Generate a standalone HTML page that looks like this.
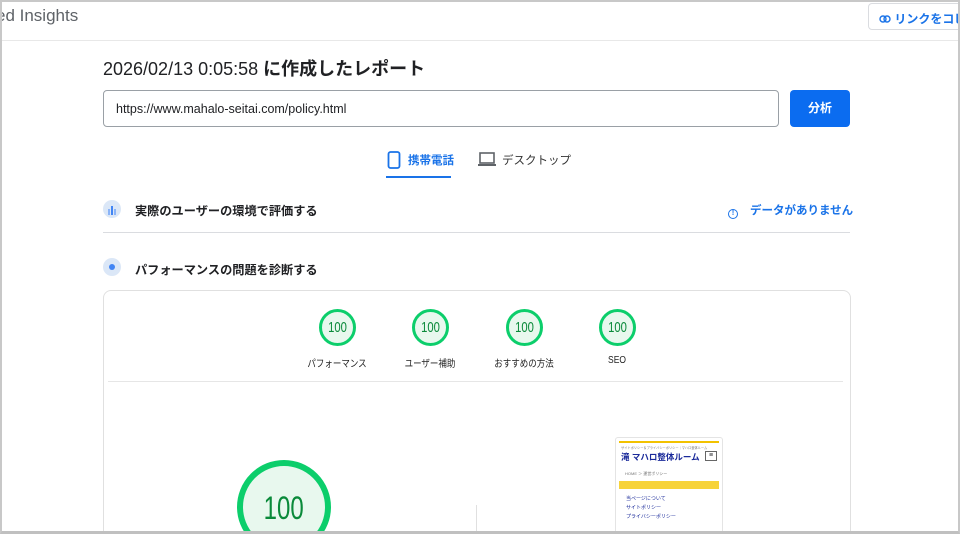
<!DOCTYPE html>
<html><head><meta charset="utf-8"><style>
*{margin:0;padding:0;box-sizing:border-box}
html,body{width:960px;height:534px;overflow:hidden}
body{background:#fff;font-family:"Liberation Sans","Noto Sans CJK JP",sans-serif;position:relative;color:#202124}
.a{position:absolute}
.frame{position:absolute;left:0;top:0;width:960px;height:534px;border:2px solid #c8c8c8;border-bottom:3px solid #c0c0c0;pointer-events:none}
.g{position:absolute;border-radius:50%;border:3px solid #0cce6b;background:#e8f8ee;color:#0a8a3a;display:flex;align-items:center;justify-content:center}
.g span{display:inline-block;transform:scaleX(.75)}
.lbl{position:absolute;font-size:10px;color:#222;width:100px;text-align:center;transform:scaleX(.85)}
</style></head><body>
<div class="a" style="left:-4px;top:6px;font-size:17px;color:#5f6368">ed Insights</div>
<div class="a" style="left:868px;top:3px;width:110px;height:27px;border:1px solid #dadce0;border-radius:4px;font-size:12px;color:#1a73e8;font-weight:bold;padding:6px 0 0 10px;white-space:nowrap">
<svg width="12" height="8" viewBox="0 0 12 8" style="vertical-align:0"><rect x="1" y="1" width="6" height="6" rx="3" fill="none" stroke="#1a73e8" stroke-width="1.4"/><rect x="5" y="1" width="6" height="6" rx="3" fill="none" stroke="#1a73e8" stroke-width="1.4"/></svg> リンクをコピー</div>
<div class="a" style="left:0;top:40px;width:960px;height:1px;background:#e8e8e8"></div>
<div class="a" style="left:103px;top:55px;font-size:18px;color:#202124;white-space:nowrap">2026/02/13 0:05:58 <b>に作成したレポート</b></div>
<div class="a" style="left:103px;top:90px;width:676px;height:37px;border:1px solid #9aa0a6;border-radius:4px;font-size:12.5px;padding:11px 12px;color:#202124">https://www.mahalo-seitai.com/policy.html</div>
<div class="a" style="left:790px;top:90px;width:60px;height:37px;background:#0b6cf0;border-radius:4px;color:#fff;font-size:12px;font-weight:bold;text-align:center;line-height:37px">分析</div>
<svg class="a" style="left:387px;top:151px" width="14" height="18" viewBox="0 0 14 18"><rect x="1.5" y="1" width="11" height="16" rx="2" fill="none" stroke="#1a73e8" stroke-width="1.8"/></svg>
<div class="a" style="left:408px;top:152px;font-size:11.5px;color:#1a73e8;font-weight:bold">携帯電話</div>
<div class="a" style="left:386px;top:176px;width:65px;height:2px;background:#1a73e8"></div>
<svg class="a" style="left:478px;top:152px" width="18" height="15" viewBox="0 0 18 15"><rect x="2" y="1" width="14" height="10" fill="none" stroke="#5f6368" stroke-width="1.6"/><rect x="0" y="12" width="18" height="2" fill="#5f6368"/></svg>
<div class="a" style="left:502px;top:152px;font-size:11.5px;color:#333">デスクトップ</div>
<div class="a" style="left:103px;top:200px;width:18px;height:18px;border-radius:50%;background:#dbe7f7"></div>
<svg class="a" style="left:106px;top:203px" width="12" height="12"><rect x="2" y="6" width="2" height="6" fill="#8ab4f8"/><rect x="5" y="3" width="2" height="9" fill="#4285f4"/><rect x="8" y="6" width="2" height="6" fill="#8ab4f8"/></svg>
<div class="a" style="left:135px;top:201px;font-size:12.2px;font-weight:bold;color:#202124">実際のユーザーの環境で評価する</div>
<div class="a" style="left:728px;top:202px;font-size:11.5px;color:#1a73e8;font-weight:bold;white-space:nowrap"><span style="display:inline-block;width:10px;height:10px;border:1.3px solid #1a73e8;border-radius:50%;font-size:7px;line-height:8px;text-align:center;vertical-align:-1px;margin-right:12px">!</span>データがありません</div>
<div class="a" style="left:103px;top:232px;width:747px;height:1px;background:#dadce0"></div>
<div class="a" style="left:103px;top:258px;width:18px;height:18px;border-radius:50%;background:#dbe7f7"></div>
<div class="a" style="left:109px;top:264px;width:6px;height:6px;border-radius:50%;background:#4285f4"></div>
<div class="a" style="left:135px;top:260px;font-size:12.2px;font-weight:bold;color:#202124">パフォーマンスの問題を診断する</div>
<div class="a" style="left:103px;top:290px;width:748px;height:260px;border:1px solid #e0e0e0;border-radius:8px"></div>
<div class="g" style="left:319px;top:309px;width:37px;height:37px;font-size:15px"><span>100</span></div>
<div class="g" style="left:412px;top:309px;width:37px;height:37px;font-size:15px"><span>100</span></div>
<div class="g" style="left:506px;top:309px;width:37px;height:37px;font-size:15px"><span>100</span></div>
<div class="g" style="left:599px;top:309px;width:37px;height:37px;font-size:15px"><span>100</span></div>
<div class="lbl" style="left:287px;top:355px">パフォーマンス</div>
<div class="lbl" style="left:380px;top:355px">ユーザー補助</div>
<div class="lbl" style="left:474px;top:355px">おすすめの方法</div>
<div class="lbl" style="left:567px;top:355px">SEO</div>
<div class="a" style="left:108px;top:381px;width:735px;height:1px;background:#e6e6e6"></div>
<div class="g" style="left:237px;top:460px;width:94px;height:94px;border-width:6px;font-size:32px;align-items:flex-start;padding-top:24px"><span>100</span></div>
<div class="a" style="left:476px;top:505px;width:1px;height:30px;background:#e0e0e0"></div>
<div class="a" style="left:615px;top:437px;width:108px;height:100px;border:1px solid #e4e4e4;border-radius:3px;background:#fff;overflow:hidden">
<div class="a" style="left:3px;top:3px;width:100px;height:2px;background:#f2c200"></div>
<div class="a" style="left:5px;top:8px;font-size:4px;color:#777;white-space:nowrap;transform:scale(.8);transform-origin:left top">サイトポリシー＆プライバシーポリシー｜マハロ整体ルーム</div>
<div class="a" style="left:5px;top:13px;font-size:8.5px;font-weight:bold;color:#1a2a9a;white-space:nowrap">滝 マハロ整体ルーム</div>
<div class="a" style="left:89px;top:13px;width:12px;height:10px;border:1px solid #666;font-size:7px;line-height:8px;text-align:center">≡</div>
<div class="a" style="left:9px;top:33px;font-size:4px;color:#777;white-space:nowrap">HOME ＞ 運営ポリシー</div>
<div class="a" style="left:3px;top:43px;width:100px;height:8px;background:#f7d33a"></div>
<div class="a" style="left:10px;top:57px;font-size:5px;line-height:9px;color:#1a2a9a;white-space:nowrap">当ページについて<br>サイトポリシー<br>プライバシーポリシー</div>
<div class="a" style="left:3px;top:93px;width:100px;height:6px;background:#f7d33a"></div>
</div>
<div class="frame"></div>
</body></html>
